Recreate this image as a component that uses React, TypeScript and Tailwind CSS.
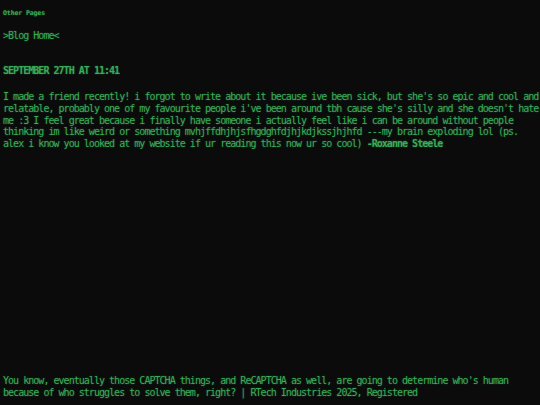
export default function App() {
  const mono = "font-['DejaVu_Sans_Mono',_'Liberation_Mono',_monospace]";
  return (
    <div className={`${mono} flex min-h-[405px] w-[540px] flex-col bg-[#0b0b0b] pl-[3px] pr-[1px] pt-[9px] pb-[7px] text-[#3aab58] [text-shadow:0_0_2px_rgba(58,171,88,0.45)]`}>
      <div className="text-[6.5px] font-bold leading-[8px] tracking-[-0.1px]">Other Pages</div>
      <div className="mt-[13px] text-[10px] leading-[12px] tracking-[-0.97px]">&gt;Blog Home&lt;</div>
      <div className="mt-[23px] text-[10px] font-bold leading-[12px] tracking-[-0.97px]">SEPTEMBER 27TH AT 11:41</div>
      <p className="mt-[14px] text-[10px] leading-[11.75px] tracking-[-0.97px]">
        I made a friend recently! i forgot to write about it because ive been sick, but she's so epic and cool and relatable, probably one of my favourite people i've been around tbh cause she's silly and she doesn't hate me :3 I feel great because i finally have someone i actually feel like i can be around without people thinking im like weird or something mvhjffdhjhjsfhgdghfdjhjkdjkssjhjhfd ---my brain exploding lol (ps. alex i know you looked at my website if ur reading this now ur so cool) <span className="font-bold">-Roxanne Steele</span>
      </p>
      <p className="mt-auto text-[10px] leading-[11.5px] tracking-[-0.97px]">
        You know, eventually those CAPTCHA things, and ReCAPTCHA as well, are going to determine who's human because of who struggles to solve them, right? | RTech Industries 2025, Registered
      </p>
    </div>
  );
}
